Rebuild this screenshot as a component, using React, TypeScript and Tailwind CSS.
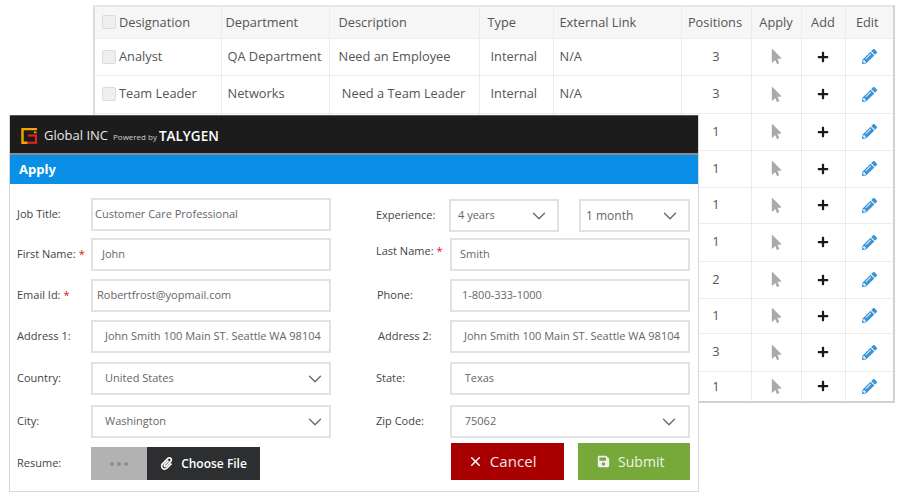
import type { ReactNode } from "react";
import { ChevronDown, X } from "lucide-react";
import {
  FaMousePointer,
  FaPaperclip,
  FaPencilAlt,
  FaPlus,
  FaSave,
} from "react-icons/fa";

const font = "font-['Open_Sans','Noto_Sans',sans-serif]";

const rows = [
  { h: "h-[37px]", name: "Analyst", dept: "QA Department", desc: "Need an Employee", type: "Internal", link: "N/A", pos: 3 },
  { h: "h-[38px]", name: "Team Leader", dept: "Networks", desc: " Need a Team Leader", type: "Internal", link: "N/A", pos: 3 },
  { h: "h-[37px]", pos: 1 },
  { h: "h-[37px]", pos: 1 },
  { h: "h-[36px]", pos: 1 },
  { h: "h-[38px]", pos: 1 },
  { h: "h-[37px]", pos: 2 },
  { h: "h-[35px]", pos: 1 },
  { h: "h-[38px]", pos: 3 },
  { h: "h-[31px]", pos: 1 },
];

const cell = "whitespace-nowrap border-r border-b border-[#ececec] p-0 text-[12.8px] font-normal text-[#555]";

function CheckBox() {
  return <span className="mr-[3px] inline-block h-[14px] w-[14px] shrink-0 rounded-[2px] border border-[#dcdcdc] bg-[#efefef]" />;
}

function JobsTable() {
  return (
    <table className="ml-[93px] mt-[5px] w-[800px] table-fixed border-collapse border-t-2 border-r-2 border-b-2 border-l-2 border-t-[#e6e6e6] border-r-[#d2d2d2] border-b-[#d2d2d2] border-l-[#dcdcdc]">
      <colgroup>
        <col className="w-[127px]" />
        <col className="w-[108px]" />
        <col className="w-[150px]" />
        <col className="w-[74px]" />
        <col className="w-[128px]" />
        <col className="w-[70px]" />
        <col className="w-[50px]" />
        <col className="w-[44px]" />
        <col className="w-[49px]" />
      </colgroup>
      <thead>
        <tr className="h-[32px] bg-[#f6f6f6]">
          <th className={cell}>
            <div className="flex items-center pl-[7px]">
              <CheckBox />
              Designation
            </div>
          </th>
          <th className={`${cell} pl-[4px] text-left`}>Department</th>
          <th className={`${cell} pl-[9px] text-left`}>Description</th>
          <th className={`${cell} pl-[8px] text-left`}>Type</th>
          <th className={`${cell} pl-[6px] text-left`}>External Link</th>
          <th className={`${cell} pr-[2px]`}>Positions</th>
          <th className={cell}>Apply</th>
          <th className={cell}>Add</th>
          <th className={`${cell} pr-[4px]`}>Edit</th>
        </tr>
      </thead>
      <tbody>
        {rows.map((r, i) => (
          <tr key={i} className={r.h}>
            <td className={cell}>
              {r.name && (
                <div className="flex items-center pl-[7px]">
                  <CheckBox />
                  {r.name}
                </div>
              )}
            </td>
            <td className={`${cell} pl-[6px]`}>{r.dept}</td>
            <td className={`${cell} whitespace-pre pl-[9px]`}>{r.desc}</td>
            <td className={`${cell} pl-[11px]`}>{r.type}</td>
            <td className={`${cell} pl-[6px]`}>{r.link}</td>
            <td className={`${cell} text-center`}>{r.pos}</td>
            <td className={cell}>
              <FaMousePointer className="mx-auto h-[15px] w-[15px] text-[#aaaaaa]" />
            </td>
            <td className={cell}>
              <FaPlus className="mx-auto h-[12px] w-[12px] text-[#1a1a1a]" />
            </td>
            <td className={cell}>
              <FaPencilAlt className="mx-auto h-[15px] w-[15px] text-[#3a94d6]" />
            </td>
          </tr>
        ))}
      </tbody>
    </table>
  );
}

function Logo() {
  return (
    <svg width="16" height="16" viewBox="0 0 16 16" fill="none" className="mt-[2px] shrink-0">
      <path d="M16 1H1.5V14.8H7" stroke="#f5a400" strokeWidth="2.4" />
      <path d="M7 7.5H15V14.8H6" stroke="#e8211d" strokeWidth="2" />
      <rect x="13" y="3.5" width="2.5" height="1.8" fill="#f5a400" />
    </svg>
  );
}

function Label({ children, required, className }: { children: ReactNode; required?: boolean; className?: string }) {
  return (
    <span className={`text-[11px] text-[#444] ${className ?? ""}`}>
      {children}
      {required && <span className="ml-[3px] text-[#e01010]">*</span>}
    </span>
  );
}

function Box({ children, select, className }: { children: ReactNode; select?: boolean; className: string }) {
  return (
    <div className={`flex items-center justify-between border-2 border-[#e2e2e2] bg-white text-[#666] ${className}`}>
      <span className="whitespace-nowrap">{children}</span>
      {select && <ChevronDown className="h-[22px] w-[22px] shrink-0 text-[#666]" strokeWidth={1.4} />}
    </div>
  );
}

function LeftColumn() {
  const box = "h-[33px] w-[240px] text-[11px]";
  return (
    <div className="flex w-[340px] flex-col pl-[7px] pt-[14px]">
      <div className="flex items-center">
        <Label className="w-[74px]">Job Title:</Label>
        <Box className={`${box} pl-[2px]`}>Customer Care Professional</Box>
      </div>
      <div className="mt-[7px] flex items-center">
        <Label required className="w-[74px]">First Name:</Label>
        <Box className={`${box} pl-[9px]`}>John</Box>
      </div>
      <div className="mt-[8px] flex items-center">
        <Label required className="w-[74px]">Email Id:</Label>
        <Box className={`${box} pl-[4px]`}>Robertfrost@yopmail.com</Box>
      </div>
      <div className="mt-[8px] flex items-center">
        <Label className="w-[74px]">Address 1:</Label>
        <Box className={`${box} pl-[12px]`}>John Smith 100 Main ST. Seattle WA 98104</Box>
      </div>
      <div className="mt-[9px] flex items-center">
        <Label className="w-[74px]">Country:</Label>
        <Box select className={`${box} pl-[12px] pr-[3px]`}>United States</Box>
      </div>
      <div className="mt-[10px] flex items-center">
        <Label className="w-[74px]">City:</Label>
        <Box select className={`${box} pl-[12px] pr-[3px]`}>Washington</Box>
      </div>
      <div className="mt-[9px] flex items-center">
        <Label className="w-[74px]">Resume:</Label>
        <div className="flex h-[33px] w-[169px]">
          <div className="flex w-[56px] items-center justify-center gap-[3px] bg-[#b2b2b2]">
            <span className="h-[4px] w-[4px] rounded-full bg-[#8f8f8f]" />
            <span className="h-[4px] w-[4px] rounded-full bg-[#8f8f8f]" />
            <span className="h-[4px] w-[4px] rounded-full bg-[#8f8f8f]" />
          </div>
          <div className="flex flex-1 items-center justify-center gap-[8px] bg-[#2d2e30] text-[12px] font-semibold text-white">
            <FaPaperclip className="h-[13px] w-[13px]" />
            Choose File
          </div>
        </div>
      </div>
    </div>
  );
}

function RightColumn() {
  const box = "h-[33px] w-[240px] text-[11px]";
  return (
    <div className="flex w-[340px] flex-col pl-[26px] pt-[15px]">
      <div className="flex items-center">
        <Label className="w-[73px]">Experience:</Label>
        <Box select className="h-[33px] w-[110px] pl-[7px] pr-[7px] text-[11px]">4 years</Box>
        <Box select className="ml-[20px] h-[33px] w-[111px] pl-[5px] pr-[7px] text-[12px]">1 month</Box>
      </div>
      <div className="mt-[6px] flex items-center">
        <Label required className="-mt-[7px] w-[74px]">Last Name:</Label>
        <Box className={`${box} pl-[8px]`}>Smith</Box>
      </div>
      <div className="mt-[8px] flex items-center">
        <Label className="w-[74px] pl-[1px]">Phone:</Label>
        <Box className={`${box} pl-[10px]`}>1-800-333-1000</Box>
      </div>
      <div className="mt-[8px] flex items-center">
        <Label className="w-[74px] pl-[2px]">Address 2:</Label>
        <Box className={`${box} pl-[12px]`}>John Smith 100 Main ST. Seattle WA 98104</Box>
      </div>
      <div className="mt-[9px] flex items-center">
        <Label className="w-[74px]">State:</Label>
        <Box className={`${box} w-[241px] pl-[13px]`}>Texas</Box>
      </div>
      <div className="mt-[10px] flex items-center">
        <Label className="w-[74px]">Zip Code:</Label>
        <Box select className={`${box} w-[241px] pl-[13px] pr-[8px]`}>75062</Box>
      </div>
      <div className="mt-[5px] flex pl-[75px]">
        <div className="flex h-[37px] w-[113px] items-center justify-center gap-[7px] bg-[#a80000] pr-[10px] text-[15px] tracking-[0.1px] text-[#f5e6e6]">
          <X className="h-[15px] w-[15px] text-white" strokeWidth={2.4} />
          Cancel
        </div>
        <div className="ml-[14px] flex h-[37px] w-[113px] items-center justify-center gap-[8px] bg-[#76a83a] pr-[6px] text-[14px] text-[#f0f5e8]">
          <FaSave className="h-[13px] w-[13px] text-[#f0f0f0]" />
          Submit
        </div>
      </div>
    </div>
  );
}

function ApplyForm() {
  return (
    <div className="absolute left-[9px] top-[115px] h-[377px] w-[690px] border-x border-b border-[#d8d8d8] bg-white">
      <div className="flex h-[40px] items-center gap-[7px] border-t border-b-2 border-t-[#555] border-b-[#8c8c8c] bg-[#1c1c1c] pl-[11px]">
        <Logo />
        <span className="mt-[2px] text-[13px] text-[#e8e8e8]">Global INC</span>
        <span className="-ml-[2px] mt-[4px] text-[8px] text-[#cfcfcf]">Powered by</span>
        <span className="-ml-[5px] mt-[3px] text-[13.5px] font-semibold text-white">TALYGEN</span>
      </div>
      <div className="flex h-[29px] items-center bg-[#0a8fe6] pl-[9px] text-[13px] font-bold text-white">Apply</div>
      <div className="flex">
        <LeftColumn />
        <RightColumn />
      </div>
    </div>
  );
}

export default function App() {
  return (
    <div className={`relative h-[500px] w-[900px] overflow-hidden bg-white ${font}`}>
      <JobsTable />
      <ApplyForm />
    </div>
  );
}
